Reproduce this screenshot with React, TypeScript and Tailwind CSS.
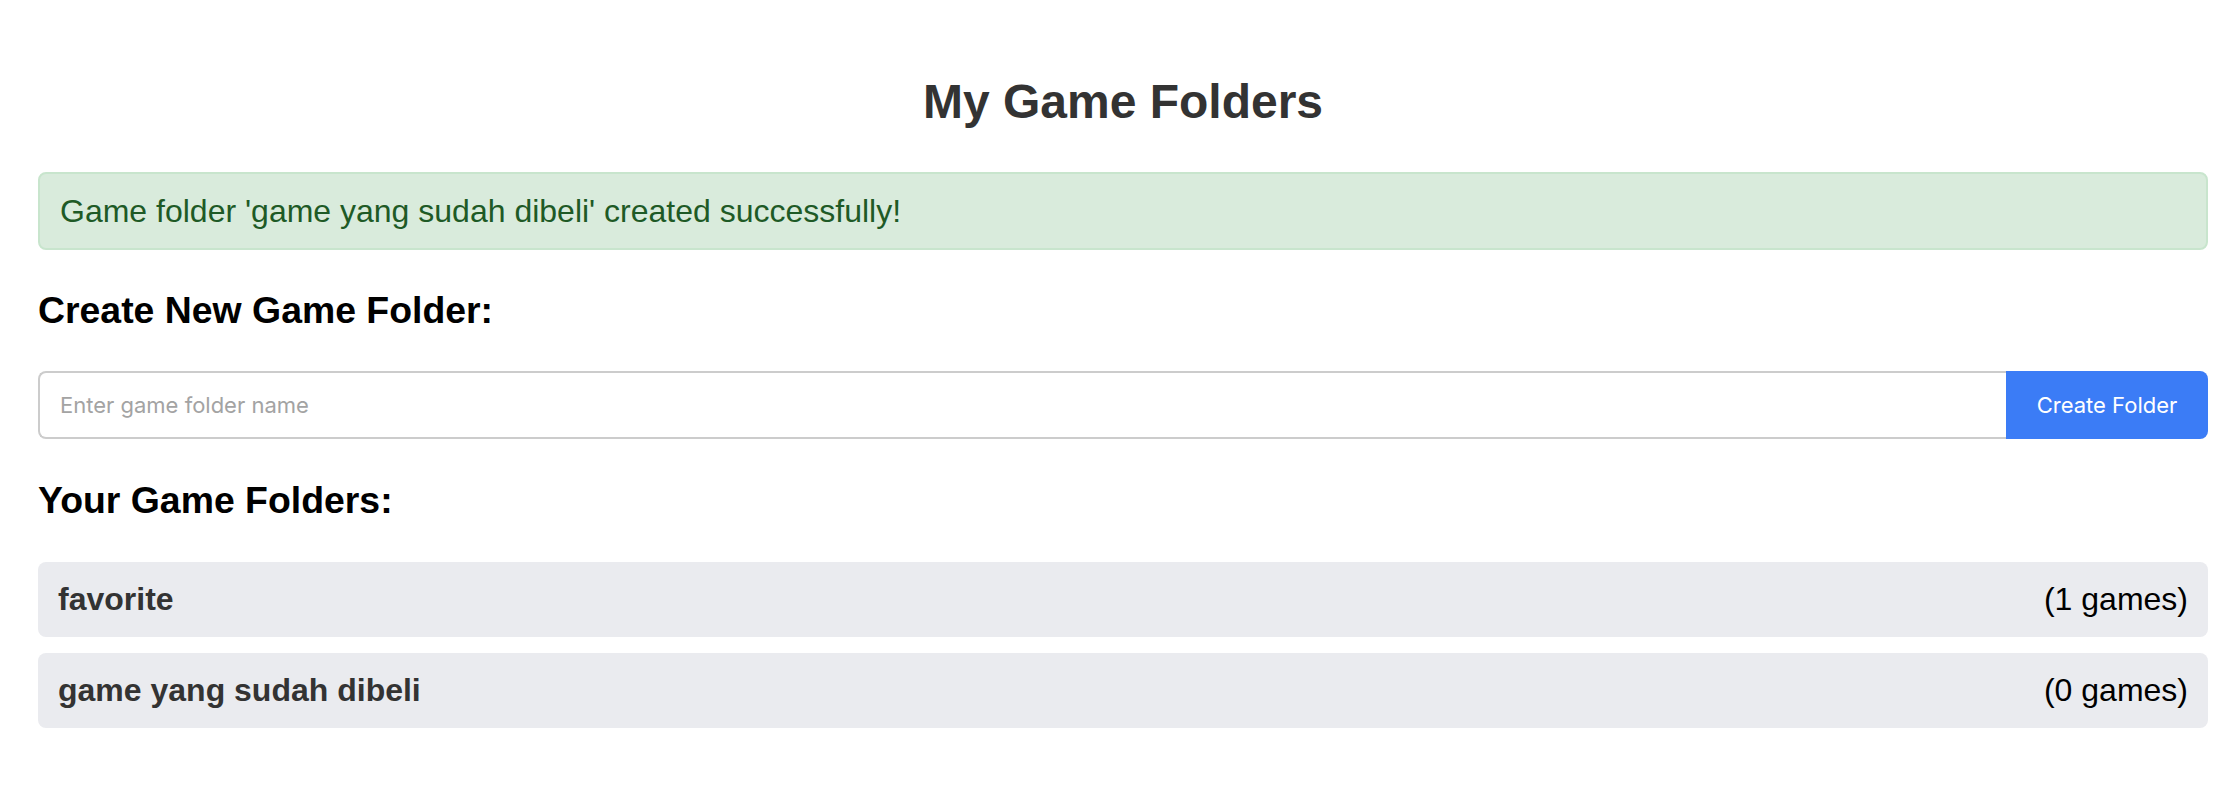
import React from "react";

const folders = [
  { name: "favorite", count: 1 },
  { name: "game yang sudah dibeli", count: 0 },
];

const App = () => {
  return (
    <div className="min-h-screen bg-white pl-[38px] pr-[32px] font-['Liberation_Sans',Arial,sans-serif]">
      {/* Title */}
      <h1 className="pt-[74px] text-center text-[48px] leading-[56px] font-bold text-[#333333]">
        My Game Folders
      </h1>

      {/* Success message */}
      <div className="mt-[42px] rounded-lg border-2 border-[#c8e5cd] bg-[#d9ebdc] px-[20px] py-[20px] text-[32px] leading-[34px] text-[#1e5a26]">
        Game folder 'game yang sudah dibeli' created successfully!
      </div>

      {/* Create form */}
      <h3 className="mt-[39px] text-[37.4px] leading-[43px] font-bold text-black">
        Create New Game Folder:
      </h3>
      <div className="mt-[39px] flex h-[68px]">
        <input
          type="text"
          placeholder="Enter game folder name"
          className="h-full flex-1 rounded-l-lg border-2 border-r-0 border-[#cccccc] bg-white px-[20px] font-['Inter',sans-serif] text-[22px] text-[#333] outline-none placeholder:text-[#a3a3a3]"
        />
        <button className="h-full w-[202px] rounded-r-lg bg-[#3b7cf6] font-['Inter',sans-serif] text-[22px] text-white">
          Create Folder
        </button>
      </div>

      {/* Folder list */}
      <h3 className="mt-[40px] text-[37.4px] leading-[43px] font-bold text-black">
        Your Game Folders:
      </h3>
      <ul className="mt-[40px] flex flex-col gap-[16px]">
        {folders.map((f) => (
          <li
            key={f.name}
            className="flex items-center justify-between rounded-lg bg-[#eaebef] px-[20px] py-[20px] text-[32px] leading-[35px]"
          >
            <span className="font-bold text-[#333333]">{f.name}</span>
            <span className="text-black">({f.count} games)</span>
          </li>
        ))}
      </ul>
    </div>
  );
};

export default App;
